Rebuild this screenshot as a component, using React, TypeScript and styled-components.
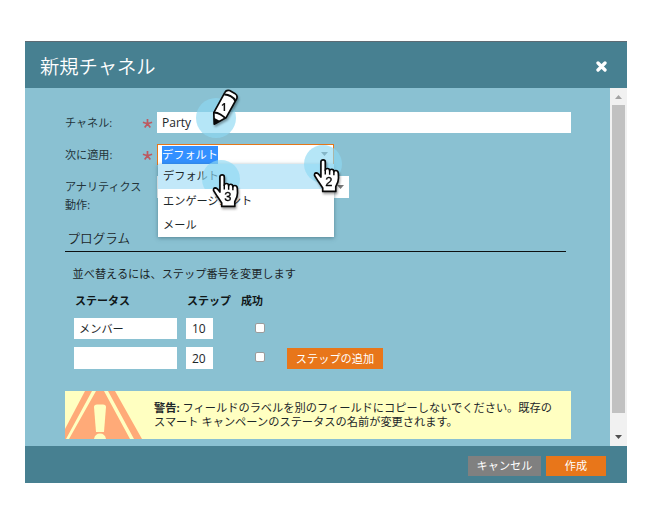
import React from "react";
import styled, { createGlobalStyle } from "styled-components";

const Global = createGlobalStyle`
  * { box-sizing: border-box; }
  body { margin: 0; background: #fff; }
`;

const Page = styled.main`
  width: 646px;
  height: 517px;
  padding: 41px 19px 34px 25px;
  overflow: hidden;
  font-family: "Open Sans", "Noto Sans CJK JP", sans-serif;
  font-size: 11.2px;
  line-height: 18px;
  color: #1c2629;
`;

const Dialog = styled.section`
  position: relative;
  width: 602px;
  height: 442px;
  display: flex;
  flex-direction: column;
  background: #8ac1d2;
`;

const Header = styled.header`
  height: 47px;
  flex: none;
  display: flex;
  align-items: center;
  justify-content: space-between;
  padding: 3px 20px 0 15px;
  background: #478091;
  border-top: 1px solid #5d6b74;
`;

const Title = styled.h1`
  margin: 0;
  font-size: 19.3px;
  line-height: 28px;
  font-weight: 350;
  color: #fff;
`;

const Body = styled.div`
  height: 358px;
  display: flex;
`;

const Form = styled.div`
  width: 585px;
  padding: 24px 39px 0 40px;
`;

const FieldRow = styled.div<{ $height: number }>`
  height: ${(p) => p.$height}px;
  display: grid;
  grid-template-columns: 77px 15px 1fr;
  align-items: start;
`;

const Label = styled.label`
  padding-top: 2px;
  font-size: 11.1px;
  white-space: nowrap;
  color: #23343a;
`;

const Required = styled.svg`
  width: 11px;
  height: 11px;
  margin-top: 6px;
`;

const Field = styled.div<{ $width: number; $height?: number; $pad?: number; $size?: number }>`
  width: ${(p) => p.$width}px;
  height: ${(p) => p.$height ?? 21}px;
  display: flex;
  align-items: center;
  padding: 1px 0 0 ${(p) => p.$pad ?? 5}px;
  background: #fff;
  font-size: ${(p) => p.$size ?? 12}px;
`;

const Combo = styled.div`
  position: relative;
  width: 177px;
  height: 21px;
  display: flex;
  align-items: center;
  justify-content: space-between;
  padding: 0 5px 0 4px;
  background: #fff;
  border: 1px solid #e67718;
`;

const Selected = styled.span`
  height: 18px;
  line-height: 17px;
  background: #3390ff;
  color: #fff;
`;

const Menu = styled.ul`
  position: absolute;
  z-index: 2;
  left: 0;
  top: 19px;
  width: 176px;
  height: 73px;
  margin: 0;
  padding: 0;
  list-style: none;
  background: #fff;
  box-shadow: 0 1px 4px rgba(40, 80, 95, 0.55);
`;

const Option = styled.li<{ $active?: boolean }>`
  height: ${(p) => (p.$active ? 25 : 24)}px;
  padding: 3px 0 0 5px;
  background: ${(p) => (p.$active ? "#c2e8f9" : "#fff")};
`;

const Select = styled(Field)`
  justify-content: flex-end;
  padding-right: 5px;
`;

const SectionTitle = styled.h2`
  width: 501px;
  height: 25px;
  margin: 0;
  padding: 2px 0 0 2.5px;
  border-bottom: 1px solid #0d1112;
  font-size: 12.6px;
  line-height: 20px;
  font-weight: 350;
`;

const Hint = styled.p`
  height: 27px;
  margin: 13px 0 0;
  padding: 0 0 0 7.5px;
`;

const StepGrid = styled.div`
  display: grid;
  grid-template-columns: 112px 54px 47px 96px;
  grid-template-rows: 26px 29px 22px;
  padding-left: 9px;
  align-items: start;
`;

const ColumnTitle = styled.strong`
  padding-left: 1px;
  font-weight: 700;
  font-size: 11px;
  line-height: 18px;
  color: #101719;
  white-space: nowrap;
`;

const Check = styled.span`
  width: 10px;
  height: 10px;
  margin: 5px 0 0 15px;
  border: 1px solid #9b9b9b;
  border-radius: 2px;
  background: #fff;
`;

const Action = styled.button<{ $width: number; $muted?: boolean }>`
  width: ${(p) => p.$width}px;
  height: 20px;
  padding: 0;
  border: 0;
  background: ${(p) => (p.$muted ? "#808080" : "#e8761a")};
  color: #fff;
  font: inherit;
  line-height: 18px;
`;

const AddStep = styled(Action)`
  height: 21px;
  margin-top: 1px;
`;

const Warning = styled.aside`
  width: 506px;
  height: 48px;
  margin-top: 22px;
  display: flex;
  background: #ffffc1;
  line-height: 14px;

  svg { flex: none; width: 77px; height: 48px; }
  p { margin: 0; padding: 10px 0 0 12px; font-size: 11.22px; white-space: nowrap; }
  strong { font-weight: 700; }
`;

const Scrollbar = styled.div`
  width: 17px;
  display: flex;
  flex-direction: column;
  align-items: center;
  background: #f1f1f1;

  svg { flex: none; width: 17px; height: 17px; }
`;

const Thumb = styled.div`
  width: 13px;
  height: 308px;
  margin-bottom: 16px;
  background: #c1c1c1;
`;

const Footer = styled.footer`
  height: 37px;
  display: flex;
  justify-content: flex-end;
  gap: 5px;
  padding: 10px 21px 0 0;
  background: #478091;
`;

const Marker = styled.svg<{ $x: number; $y: number; $size: number }>`
  position: absolute;
  z-index: 3;
  left: ${(p) => p.$x}px;
  top: ${(p) => p.$y}px;
  width: ${(p) => p.$size}px;
  height: ${(p) => p.$size}px;
  overflow: visible;
  pointer-events: none;
  filter: drop-shadow(1px 2px 1px rgba(0, 0, 0, 0.35));
`;

const Halo = styled.span<{ $x: number; $y: number; $size: number; $cut?: number }>`
  position: absolute;
  z-index: 3;
  left: ${(p) => p.$x}px;
  top: ${(p) => p.$y}px;
  width: ${(p) => p.$size}px;
  height: ${(p) => p.$size}px;
  border-radius: 50%;
  background: rgba(142, 216, 243, 0.65);
  clip-path: inset(0 0 ${(p) => p.$cut ?? 0}px 0);
`;

const Star = () => (
  <Required viewBox="0 0 11 11">
    <path d="M5.5 5.7V1M5.5 5.7.9 4.2M5.5 5.7l4.6-1.5M5.5 5.7 2.7 9.6M5.5 5.7l2.8 3.9" stroke="#bd5a61" strokeWidth="1.7" fill="none" />
  </Required>
);

const Caret = () => (
  <svg width="7" height="5" viewBox="0 0 7 5">
    <path d="M0 0h7L3.5 4z" fill="#777" />
  </svg>
);

const Hand = ({ x, y, label }: { x: number; y: number; label: string }) => (
  <Marker $x={x} $y={y} $size={67} viewBox="0 0 60 60">
    <path
      d="M6.2 2.4Q6.4.8 8.2.8q1.9 0 1.9 1.8V10q.3-1.5 1.9-1.5 2 0 2 2 .3-1.3 1.8-1.3 2 0 2 2.2.4-1.1 1.7-1.1 2.1 0 2.3 2.6.5 4.8-.4 7.6l-1.9 4.2V29H7.8v-3L3.8 20 .5 14.8Q.2 12.5 1.9 12.4q2 .1 4.3 3.8z"
      fill="#fff" stroke="#080808" strokeWidth="1.5" strokeLinejoin="round"
    />
    <path d="M10.1 9.5v4.4M14 10.5v3.7M17.8 11.6v2.9" stroke="#080808" strokeWidth="1.3" />
    <text x="13.4" y="24.6" textAnchor="middle" fontSize="11.6" fontFamily="Liberation Sans, sans-serif" stroke="#111" strokeWidth=".3">{label}</text>
  </Marker>
);

const Pencil = () => (
  <Marker $x={187} $y={48} $size={60} viewBox="0 0 60 60">
    <path d="M12.9 3.3Q14.2.7 17.6 1.5L22.8 4.4Q26 6.4 24.8 9.5L14 28.8 2.2 35.2 1.8 23.6z" fill="#fff" stroke="#0a0a0a" strokeWidth="1.7" strokeLinejoin="round" />
    <path d="M2 28.8 2.2 35.2 8 32.1z" fill="#0a0a0a" />
    <path d="M12.2 5.4q3.4-.2 6.4 1.8 3.8 2 4.7 4.8M1.9 23.6q3.6.1 6.6 1.9t5 3.7" fill="none" stroke="#0a0a0a" strokeWidth="2" />
    <text x="11.8" y="22.2" textAnchor="middle" fontSize="10" fontFamily="Open Sans, sans-serif" fontWeight="700" fill="#111">1</text>
  </Marker>
);

export default function App() {
  return (
    <Page>
      <Global />
      <Dialog role="dialog">
        <Header>
          <Title>新規チャネル</Title>
          <svg width="11" height="11" viewBox="0 0 11 11">
            <path d="m2 2 7 7M9 2 2 9" stroke="#fff" strokeWidth="3.3" strokeLinecap="round" />
          </svg>
        </Header>
        <Body>
          <Form>
            <FieldRow $height={32}>
              <Label>チャネル:</Label>
              <Star />
              <Field $width={414}>Party</Field>
            </FieldRow>
            <FieldRow $height={32}>
              <Label>次に適用:</Label>
              <Star />
              <Combo>
                <Selected>デフォルト</Selected>
                <Caret />
                <Menu>
                  <Option $active>デフォルト</Option>
                  <Option>エンゲージメント</Option>
                  <Option>メール</Option>
                </Menu>
              </Combo>
            </FieldRow>
            <FieldRow $height={51}>
              <Label>アナリティクス<br />動作:</Label>
              <span />
              <Select $width={192} $height={22}><Caret /></Select>
            </FieldRow>
            <SectionTitle>プログラム</SectionTitle>
            <Hint>並べ替えるには、ステップ番号を変更します</Hint>
            <StepGrid>
              <ColumnTitle>ステータス</ColumnTitle>
              <ColumnTitle>ステップ</ColumnTitle>
              <ColumnTitle>成功</ColumnTitle>
              <span />
              <Field $width={103} $size={11.2}>メンバー</Field>
              <Field $width={27} $pad={6}>10</Field>
              <Check />
              <span />
              <Field $width={103} $height={22} />
              <Field $width={27} $height={22} $pad={6}>20</Field>
              <Check />
              <AddStep $width={96}>ステップの追加</AddStep>
            </StepGrid>
            <Warning>
              <svg viewBox="0 0 77 48">
                <path d="M20 0h30l27 48H0V38z" fill="#ffaa78" />
                <path d="M27 0h4L4 48H1zM39 0h4l26 48h-4z" fill="#ffffc1" />
                <path d="M29 16q0-2.5 3-2.5h6q3 0 3 2.5l-2 25h-8z" fill="#ffffc1" />
                <path d="M29 48q1-5.5 6-5.5t6 5.5z" fill="#ffffc1" />
              </svg>
              <p>
                <strong>警告:</strong> フィールドのラベルを別のフィールドにコピーしないでください。既存の<br />
                スマート キャンペーンのステータスの名前が変更されます。
              </p>
            </Warning>
          </Form>
          <Scrollbar>
            <svg viewBox="0 0 17 17"><path d="M5 11 8.5 7l3.5 4z" fill="#a3a3a3" /></svg>
            <Thumb />
            <svg viewBox="0 0 17 17"><path d="M5 6h7l-3.5 4z" fill="#505050" /></svg>
          </Scrollbar>
        </Body>
        <Footer>
          <Action $width={73} $muted>キャンセル</Action>
          <Action $width={60}>作成</Action>
        </Footer>
        <Halo $x={171} $y={57} $size={40} />
        <Halo $x={279} $y={104} $size={38} />
        <Halo $x={177} $y={119} $size={38} $cut={9} />
        <Pencil />
        <Hand x={289} y={118} label="2" />
        <Hand x={188} y={133} label="3" />
      </Dialog>
    </Page>
  );
}
